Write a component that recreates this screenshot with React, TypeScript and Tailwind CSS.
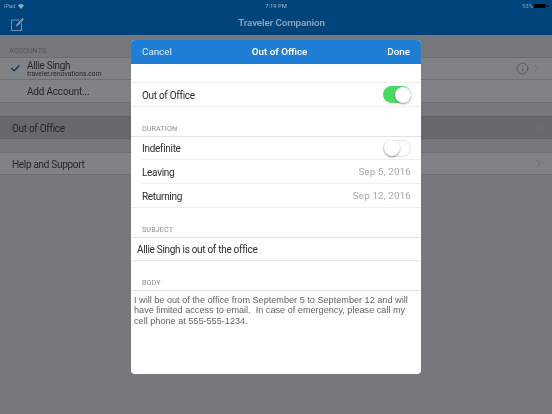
import { Check, ChevronRight, Info } from "lucide-react";

const sans = "font-['Roboto','Noto_Sans',sans-serif]";

function Toggle({ on }: { on?: boolean }) {
  return (
    <div
      className={
        on
          ? "flex h-[17px] w-[28px] items-center justify-end rounded-full bg-[#4cd964] pr-[0.5px]"
          : "flex h-[17px] w-[28px] items-center justify-start rounded-full border border-[#e5e5e5] bg-white"
      }
    >
      <div className="h-[16px] w-[16px] rounded-full bg-white shadow-[0_1px_2px_rgba(0,0,0,0.4)]" />
    </div>
  );
}

function SectionHead({ children }: { children: string }) {
  return (
    <div className="flex h-[30px] shrink-0 items-end border-b border-[#e4e4e4] pb-[1px] pl-[11px] text-[7.2px] tracking-[0.1px] text-[#8b8b8f]">
      {children}
    </div>
  );
}

function Label({ children }: { children: string }) {
  return <span className="pt-[1px] text-[10px] tracking-[-0.3px] text-[#2b2b2b]">{children}</span>;
}

function Value({ children }: { children: string }) {
  return <span className="pt-[1px] text-[9.8px] tracking-[0.15px] text-[#a9a9ad]">{children}</span>;
}

function Modal() {
  return (
    <div className="absolute left-[131px] top-[40px] flex h-[334px] w-[290px] flex-col overflow-hidden rounded-[4px] bg-white">
      <div className="flex h-[24px] shrink-0 items-center justify-between bg-[#1f7fd6] px-[11px] text-[9.8px] text-white">
        <span className="text-[#dcebf9]">Cancel</span>
        <span className="font-semibold">Out of Office</span>
        <span className="font-medium">Done</span>
      </div>
      <div className="h-[19px] shrink-0 border-b border-[#eeeeee]" />
      <div className="flex h-[24px] shrink-0 items-center justify-between border-b border-[#eeeeee] pl-[11px] pr-[10px]">
        <Label>Out of Office</Label>
        <Toggle on />
      </div>
      <SectionHead>DURATION</SectionHead>
      <div className="flex h-[22px] shrink-0 items-center justify-between pl-[11px] pr-[10px]">
        <Label>Indefinite</Label>
        <Toggle />
      </div>
      <div className="ml-[11px] h-px shrink-0 bg-[#eeeeee]" />
      <div className="flex h-[23px] shrink-0 items-center justify-between pl-[11px] pr-[10px]">
        <Label>Leaving</Label>
        <Value>Sep 5, 2016</Value>
      </div>
      <div className="ml-[11px] h-px shrink-0 bg-[#eeeeee]" />
      <div className="flex h-[24px] shrink-0 items-center justify-between border-b border-[#eeeeee] pl-[11px] pr-[10px]">
        <Label>Returning</Label>
        <Value>Sep 12, 2016</Value>
      </div>
      <SectionHead>SUBJECT</SectionHead>
      <div className="flex h-[23px] shrink-0 items-center border-b border-[#e8e8e8] pl-[6px]">
        <Label>Allie Singh is out of the office</Label>
      </div>
      <SectionHead>BODY</SectionHead>
      <p className="px-[3px] pt-[4px] font-['Liberation_Sans',sans-serif] text-[9.15px] leading-[10.4px] text-[#636367]">
        I will be out of the office from September 5 to September 12 and will have limited access to email.&nbsp; In case of emergency, please call my cell phone at 555-555-1234.
      </p>
    </div>
  );
}

export default function App() {
  return (
    <div className={`relative h-[414px] w-[552px] overflow-hidden bg-[#76787c] blur-[0.3px] ${sans}`}>
      <div className="h-[35px] bg-[#00447c]">
        <div className="grid h-[12px] grid-cols-[1fr_auto_1fr] items-center px-[4px] text-[5.8px] text-[#8fa6bd]">
          <div className="flex items-center gap-[3px]">
            <span>iPad</span>
            <svg width="6" height="5" viewBox="0 0 6 5">
              <path d="M0 1.5a4.3 4.3 0 0 1 6 0L3 5z" fill="#8fa6bd" />
            </svg>
          </div>
          <span className="font-medium">7:19 PM</span>
          <div className="flex items-center justify-end gap-[1px]">
            <span>93%</span>
            <div className="h-[4px] w-[12px] rounded-[1px] bg-black" />
            <div className="h-[2px] w-[1px] bg-black" />
          </div>
        </div>
        <div className="grid h-[23px] grid-cols-[1fr_auto_1fr] items-center pl-[11px]">
          <svg width="14" height="14" viewBox="0 0 14 14" fill="none" stroke="#8297ad" strokeWidth="0.9">
            <path d="M8.5 3H0.5V13.5H10.5V6" />
            <path d="M5 9.5L5.5 7.5L11.5 1L13 2.3L7 8.8Z" fill="#8297ad" stroke="none" />
          </svg>
          <span className="text-[9.8px] font-semibold tracking-[-0.1px] text-[#8fa3b8]">Traveler Companion</span>
        </div>
      </div>

      <div className="flex h-[22px] items-end pl-[9px] text-[7.2px] text-[#54565a]">ACCOUNTS</div>
      <div className="h-[46px] border-y border-[#6c6e71] bg-[#808285]">
        <div className="flex h-[22px] items-center border-b border-[#6c6e71] pl-[10px] pr-[9px]">
          <Check className="h-[11px] w-[11px] text-[#0b2f57]" strokeWidth={2.6} />
          <div className="ml-[6px] flex flex-col text-[#26272a]">
            <span className="text-[10px] leading-[11px] tracking-[-0.3px]">Allie Singh</span>
            <span className="text-[6.6px] leading-[7px] tracking-[0.1px]">traveler.renovations.com</span>
          </div>
          <Info className="ml-auto h-[13px] w-[13px] text-[#4d4f52]" strokeWidth={1.3} />
          <ChevronRight className="ml-[1px] h-[13px] w-[13px] text-[#66686b]" strokeWidth={1.3} />
        </div>
        <div className="flex h-[22px] items-center pl-[27px] pt-[1px] text-[10px] tracking-[-0.2px] text-[#26272a]">Add Account...</div>
      </div>
      <div className="mt-[13px] flex h-[23px] items-center justify-between border-y border-[#606164] bg-[#68696b] pl-[12px] pr-[7px] text-[10px] tracking-[-0.3px] text-[#232426]">
        <span className="pt-[1px]">Out of Office</span>
        <ChevronRight className="h-[13px] w-[13px] text-[#76777a]" strokeWidth={1.3} />
      </div>
      <div className="mt-[13px] flex h-[23px] items-center justify-between border-y border-[#6c6e71] bg-[#808285] pl-[12px] pr-[7px] text-[10px] tracking-[-0.3px] text-[#26272a]">
        <span className="pt-[1px]">Help and Support</span>
        <ChevronRight className="h-[13px] w-[13px] text-[#5e6063]" strokeWidth={1.3} />
      </div>

      <Modal />
    </div>
  );
}
